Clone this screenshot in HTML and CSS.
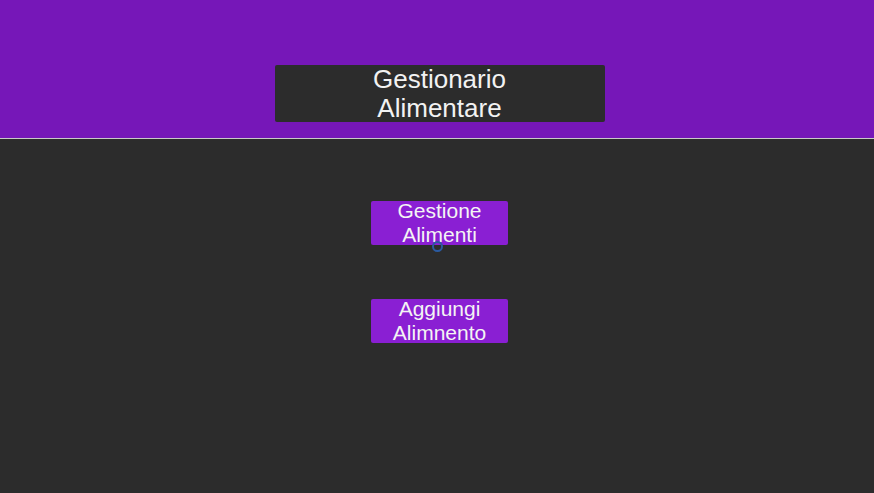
FILE: index.html
```html
<!DOCTYPE html>
<html>
<head>
<meta charset="utf-8">
<link rel="stylesheet" href="styles.css">
</head>
<body>
<header class="header">
  <div class="title">Gestionario<br>Alimentare</div>
</header>
<main class="main">
  <div class="btn-wrap">
    <button class="btn"><span class="btn-label">Gestione<br>Alimenti</span></button>
    <span class="cursor"></span>
  </div>
  <div class="btn-wrap">
    <button class="btn"><span class="btn-label">Aggiungi<br>Alimnento</span></button>
  </div>
</main>
</body>
</html>
```
FILE: styles.css
```css
html, body {
  margin: 0;
  padding: 0;
  height: 100%;
  background: #2c2c2c;
  font-family: "Liberation Sans", Arial, sans-serif;
}
.header {
  height: 138px;
  background: #7617b8;
  border-bottom: 1px solid #c9c9c9;
  display: flex;
  justify-content: center;
  align-items: flex-start;
}
.title {
  margin-top: 65px;
  width: 330px;
  height: 57px;
  background: #2c2c2c;
  border-radius: 2px;
  color: #f2f2f2;
  font-size: 26px;
  line-height: 29px;
  text-align: center;
  margin-left: 5px;
}
.main {
  display: flex;
  flex-direction: column;
  align-items: center;
  padding-top: 62px;
  gap: 54px;
}
.btn-wrap {
  position: relative;
  margin-left: 5px;
}
.btn {
  display: block;
  width: 137px;
  height: 44px;
  padding: 0;
  border: none;
  border-radius: 2px;
  background: #8a1fd3;
  color: #f4f4f4;
  font-family: "Liberation Sans", Arial, sans-serif;
  font-size: 21px;
  line-height: 24px;
  text-align: center;
}
.btn-label {
  display: block;
  margin-top: -2px;
  margin-bottom: -2px;
}
.cursor {
  position: absolute;
  left: 61px;
  top: 40px;
  width: 7px;
  height: 7px;
  border: 2px solid #2a5aa0;
  border-radius: 50%;
}
```
